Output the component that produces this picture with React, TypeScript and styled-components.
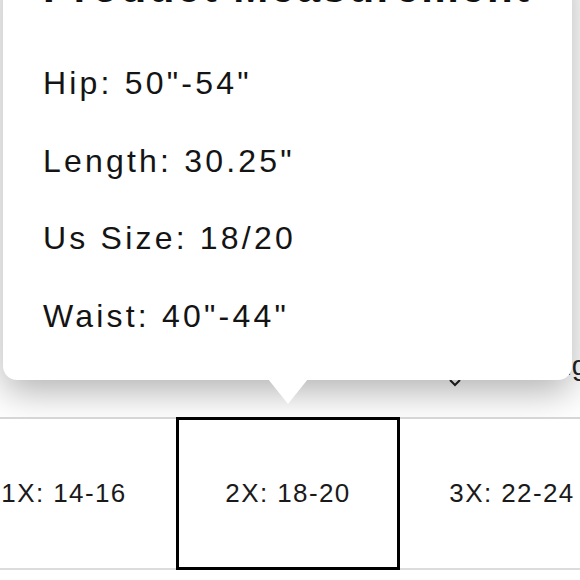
import React from "react";
import styled, { createGlobalStyle } from "styled-components";

const Global = createGlobalStyle`
  html, body { margin: 0; padding: 0; background: #ffffff; }
  body { font-family: "Liberation Sans", Arial, sans-serif; color: #111; }
`;

const Page = styled.div`
  position: relative;
  width: 580px;
  height: 580px;
  overflow: hidden;
  background: #ffffff;
`;

const BackArea = styled.div`
  height: 417px;
  display: flex;
  flex-direction: column;
  justify-content: flex-end;
`;

const GuideRow = styled.div`
  display: flex;
  align-items: center;
  gap: 49px;
  padding-left: 448px;
  margin-bottom: 35px;
  font-size: 28px;
  color: #222;
  white-space: nowrap;
`;

const Chevron = styled.svg`
  width: 14px;
  height: 10px;
  align-self: flex-end;
  margin-bottom: -6px;
  flex: none;
`;

const SizeRow = styled.div`
  position: relative;
  z-index: 2;
  display: flex;
  margin-left: -48px;
  height: 149px;
  background: #fff;
  border-top: 2px solid #d6d6d6;
  border-bottom: 2px solid #dcdcdc;
`;

const SizeOption = styled.div<{ $active?: boolean }>`
  flex: none;
  width: 224px;
  box-sizing: border-box;
  display: flex;
  align-items: center;
  justify-content: center;
  font-size: 26px;
  letter-spacing: 1.4px;
  color: #1a1a1a;
  margin-top: ${(p) => (p.$active ? "-2px" : "0")};
  margin-bottom: ${(p) => (p.$active ? "-2px" : "0")};
  border: ${(p) => (p.$active ? "3px solid #000" : "3px solid transparent")};
`;

const Popup = styled.div`
  position: absolute;
  z-index: 1;
  left: 3px;
  top: -43px;
  width: 569px;
  height: 423px;
  box-sizing: border-box;
  background: #fff;
  border-radius: 14px;
  box-shadow: 0 12px 36px rgba(0, 0, 0, 0.3);
  padding: 0 0 0 40px;
  display: flex;
  flex-direction: column;

  &::after {
    content: "";
    position: absolute;
    left: 265px;
    bottom: -24px;
    width: 0;
    height: 0;
    border-left: 20px solid transparent;
    border-right: 20px solid transparent;
    border-top: 25px solid #fff;
  }
`;

const Title = styled.div`
  font-size: 42px;
  font-weight: 700;
  line-height: 56px;
  letter-spacing: 2.5px;
  white-space: nowrap;
  margin-top: 3px;
  margin-bottom: 29px;
`;

const Line = styled.div`
  font-size: 32px;
  line-height: 77.5px;
  letter-spacing: 3.2px;
  white-space: nowrap;
  color: #141414;
`;

const measurements = [
  'Hip: 50"-54"',
  'Length: 30.25"',
  "Us Size: 18/20",
  'Waist: 40"-44"',
];

const sizes = ["1X: 14-16", "2X: 18-20", "3X: 22-24"];

export default function App() {
  return (
    <Page>
      <Global />
      <BackArea>
        <GuideRow>
          <Chevron viewBox="0 0 14 10">
            <path d="M2 2 L7 7 L12 2" fill="none" stroke="#222" strokeWidth="2" />
          </Chevron>
          <span>Sizing</span>
        </GuideRow>
      </BackArea>
      <SizeRow>
        {sizes.map((s, i) => (
          <SizeOption key={s} $active={i === 1}>
            {s}
          </SizeOption>
        ))}
      </SizeRow>
      <Popup>
        <Title>Product Measurement</Title>
        {measurements.map((m) => (
          <Line key={m}>{m}</Line>
        ))}
      </Popup>
    </Page>
  );
}
